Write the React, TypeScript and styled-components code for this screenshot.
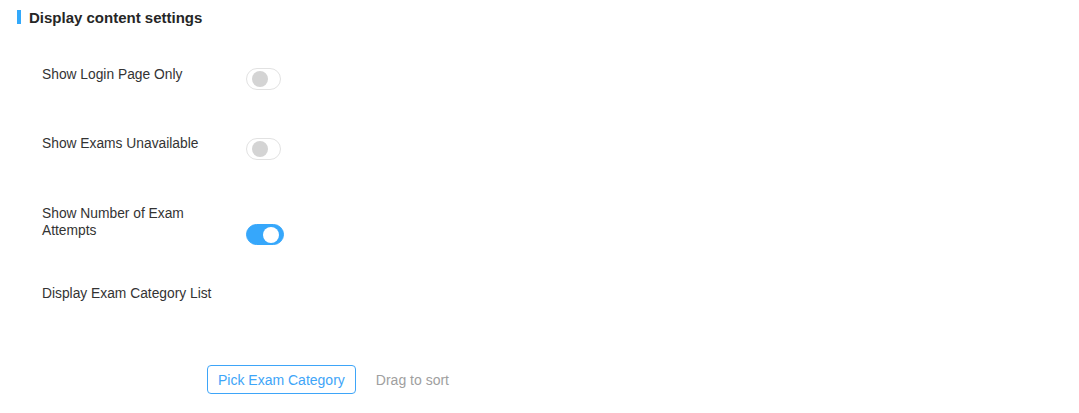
import React, { useState } from "react";
import styled, { createGlobalStyle } from "styled-components";

const GlobalStyle = createGlobalStyle`
  html, body {
    margin: 0;
    padding: 0;
    background: #ffffff;
  }
  body {
    font-family: "Liberation Sans", Arial, sans-serif;
    color: #333333;
  }
`;

const Page = styled.div`
  width: 1079px;
  height: 413px;
  box-sizing: border-box;
  padding: 9px 0 0 17px;
  overflow: hidden;
`;

const SectionTitle = styled.div`
  display: flex;
  align-items: center;
  gap: 8px;
  height: 16px;
  font-size: 15px;
  font-weight: 700;
  color: #262626;
`;

const TitleMark = styled.span`
  display: block;
  width: 4px;
  height: 14px;
  background: #33a9fb;
`;

const Form = styled.div`
  display: flex;
  flex-direction: column;
  padding: 41px 0 0 25px;
`;

const Row = styled.div<{ $height: number }>`
  display: flex;
  align-items: flex-start;
  height: ${(p) => p.$height}px;
`;

const Label = styled.div`
  width: 176px;
  margin-right: 28px;
  font-size: 13.8px;
  line-height: 17px;
  color: #333333;
`;

const Control = styled.div<{ $offset: number }>`
  padding-top: ${(p) => p.$offset}px;
`;

const Track = styled.button<{ $on: boolean }>`
  position: relative;
  display: block;
  box-sizing: border-box;
  width: ${(p) => (p.$on ? 38 : 35)}px;
  height: ${(p) => (p.$on ? 21 : 22)}px;
  padding: 0;
  border-radius: 11px;
  border: 1px solid ${(p) => (p.$on ? "#36a7fb" : "#e2e2e2")};
  background: ${(p) => (p.$on ? "#36a7fb" : "#ffffff")};
  cursor: pointer;
`;

const Knob = styled.span<{ $on: boolean }>`
  position: absolute;
  top: 50%;
  width: 16px;
  height: 16px;
  margin-top: -8px;
  border-radius: 50%;
  background: ${(p) => (p.$on ? "#ffffff" : "#d4d4d4")};
  left: ${(p) => (p.$on ? "auto" : "5px")};
  right: ${(p) => (p.$on ? "4px" : "auto")};
`;

const Actions = styled.div`
  display: flex;
  align-items: center;
  gap: 20px;
  padding-left: 165px;
`;

const PickButton = styled.button`
  height: 29px;
  padding: 0 10px;
  border: 1px solid #3ea5f8;
  border-radius: 4px;
  background: #ffffff;
  color: #3ea5f8;
  font-family: "Liberation Sans", Arial, sans-serif;
  font-size: 14px;
  cursor: pointer;
`;

const Hint = styled.span`
  font-size: 14px;
  color: #a0a0a0;
`;

const Toggle: React.FC<{ value: boolean; onChange: (v: boolean) => void }> = ({
  value,
  onChange,
}) => (
  <Track $on={value} onClick={() => onChange(!value)}>
    <Knob $on={value} />
  </Track>
);

export default function App() {
  const [loginOnly, setLoginOnly] = useState(false);
  const [unavailable, setUnavailable] = useState(false);
  const [attempts, setAttempts] = useState(true);

  return (
    <Page>
      <GlobalStyle />
      <SectionTitle>
        <TitleMark />
        Display content settings
      </SectionTitle>
      <Form>
        <Row $height={69}>
          <Label>Show Login Page Only</Label>
          <Control $offset={2}>
            <Toggle value={loginOnly} onChange={setLoginOnly} />
          </Control>
        </Row>
        <Row $height={70}>
          <Label>Show Exams Unavailable</Label>
          <Control $offset={3}>
            <Toggle value={unavailable} onChange={setUnavailable} />
          </Control>
        </Row>
        <Row $height={80}>
          <Label>Show Number of Exam Attempts</Label>
          <Control $offset={19}>
            <Toggle value={attempts} onChange={setAttempts} />
          </Control>
        </Row>
        <Row $height={80}>
          <Label>Display Exam Category List</Label>
        </Row>
        <Actions>
          <PickButton>Pick Exam Category</PickButton>
          <Hint>Drag to sort</Hint>
        </Actions>
      </Form>
    </Page>
  );
}
